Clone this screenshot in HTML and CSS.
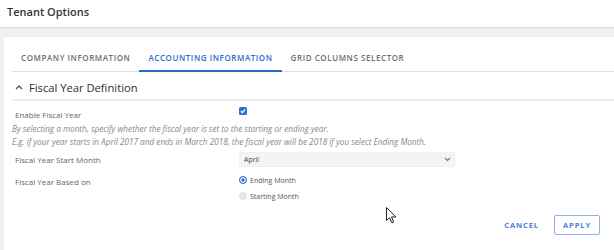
FILE: index.html
```html
<!DOCTYPE html>
<html>
<head>
  <title>Tenant Options</title>
  <link rel="stylesheet" href="styles.css">
</head>
<body>
  <div class="header">Tenant Options</div>

  <div class="page">
    <div class="panel">
      <div class="tabs">
        <div class="tab">Company Information</div>
        <div class="tab active">Accounting Information</div>
        <div class="tab">Grid Columns Selector</div>
      </div>

      <div class="section-title">
        <svg class="caret" width="8" height="6" viewBox="0 0 8 6"><path d="M1 5 L4 2 L7 5" fill="none" stroke="#555" stroke-width="1.4"/></svg>
        <span>Fiscal Year Definition</span>
      </div>

      <div class="row row-check">
        <label>Enable Fiscal Year</label>
        <span class="checkbox">
          <svg width="8" height="8" viewBox="0 0 8 8"><path d="M1.8 4.2 L3.3 5.6 L6.2 2.4" fill="none" stroke="#fff" stroke-width="1.3"/></svg>
        </span>
      </div>

      <p class="help">By selecting a month, specify whether the fiscal year is set to the starting or ending year.<br>
      E.g. if your year starts in April 2017 and ends in March 2018, the fiscal year will be 2018 if you select Ending Month.</p>

      <div class="row row-select">
        <label>Fiscal Year Start Month</label>
        <div class="select">
          <span>April</span>
          <svg width="7" height="5" viewBox="0 0 7 5"><path d="M1 1 L3.5 3.5 L6 1" fill="none" stroke="#777" stroke-width="1.2"/></svg>
        </div>
      </div>

      <div class="row row-radio">
        <label>Fiscal Year Based on</label>
        <div class="radios">
          <div class="radio-item"><span class="radio on"></span>Ending Month</div>
          <div class="radio-item"><span class="radio"></span>Starting Month</div>
        </div>
      </div>

      <div class="actions">
        <button class="btn-link">Cancel</button>
        <button class="btn-outline">Apply</button>
      </div>

      <svg class="cursor" width="12" height="18" viewBox="0 0 12 18"><path d="M0.5 0.5 L0.5 13.5 L3.6 10.6 L5.8 15.8 L7.6 15 L5.5 9.9 L9.8 9.9 Z" fill="#fff" stroke="#222" stroke-width="1"/></svg>
    </div>
  </div>
</body>
</html>
```

FILE: styles.css
```css
body {
  margin: 0;
  font-family: "Open Sans", Arial, sans-serif;
  color: #333;
  background: #fff;
}

.header {
  height: 27px;
  line-height: 24px;
  padding-left: 7px;
  font-size: 11px;
  font-weight: 600;
  color: #333;
  border-bottom: 1px solid #dcdcdc;
}

.page {
  background: #eff0f0;
  padding: 9px 0 0 4px;
  height: 213px;
}

.panel {
  position: relative;
  background: #fff;
  height: 213px;
  padding-left: 8px;
}

.tabs {
  display: flex;
  height: 34px;
  border-bottom: 1px solid #dedede;
}

.tab {
  padding: 0 9px;
  display: flex;
  align-items: center;
  padding-top: 8px;
  font-size: 8px;
  font-weight: 600;
  letter-spacing: 0.57px;
  text-transform: uppercase;
  color: #6b6f73;
  border-bottom: 2px solid transparent;
  margin-bottom: -1px;
}

.tab.active {
  color: #2e6bc9;
  border-bottom-color: #2e6bc9;
}

.section-title {
  display: flex;
  align-items: center;
  height: 24px;
  padding-top: 3px;
  border-bottom: 2px solid #eceded;
  padding-left: 3px;
  font-size: 11.2px;
  color: #2e2e2e;
}

.caret {
  margin-right: 6px;
}

.row {
  display: grid;
  grid-template-columns: 224px 1fr;
  padding-left: 3px;
  font-size: 8px;
  color: #666;
}

.row-check {
  margin-top: 6px;
}

.row-check label {
  padding-top: 2px;
}

.checkbox {
  width: 8px;
  height: 8px;
  background: #2f72d8;
  border-radius: 1.5px;
  display: flex;
}

.help {
  margin: 2px 0 0 0;
  font-size: 8.2px;
  font-style: italic;
  line-height: 13px;
  color: #888;
}

.row-select {
  margin-top: 4px;
  align-items: center;
}

.select {
  width: 216px;
  height: 15px;
  box-sizing: border-box;
  background: #f3f4f6;
  border: 1px solid #eeeff1;
  border-radius: 2px;
  display: flex;
  align-items: center;
  justify-content: space-between;
  padding: 0 3px 0 4px;
  font-size: 7px;
  color: #444;
}

.row-radio {
  margin-top: 9px;
}

.radio-item {
  display: flex;
  align-items: center;
  font-size: 7px;
  color: #555;
  height: 10px;
  margin-bottom: 6px;
  margin-top: -1px;
}

.radio-item + .radio-item {
  margin-top: 0;
}

.radio {
  width: 8px;
  height: 8px;
  box-sizing: border-box;
  border-radius: 50%;
  background: #e3e5e8;
  margin-right: 3px;
}

.radio.on {
  border: 1.3px solid #2f72d8;
  box-shadow: inset 0 0 0 1.3px #fff;
  background: #2f72d8;
}

.actions {
  display: flex;
  justify-content: flex-end;
  align-items: center;
  margin-top: 8px;
  padding-right: 14px;
}

.actions button {
  font-family: "Open Sans", Arial, sans-serif;
  font-size: 7.5px;
  font-weight: 700;
  letter-spacing: 0.9px;
  text-transform: uppercase;
  color: #4c80dc;
  background: #fff;
  cursor: pointer;
}

.btn-link {
  border: none;
  padding: 0;
  margin-right: 15px;
}

.btn-outline {
  width: 46px;
  height: 20px;
  border: 1px solid #8fb2ee;
  border-radius: 2px;
  padding: 0;
}

.cursor {
  position: absolute;
  left: 382px;
  top: 170px;
}
```
